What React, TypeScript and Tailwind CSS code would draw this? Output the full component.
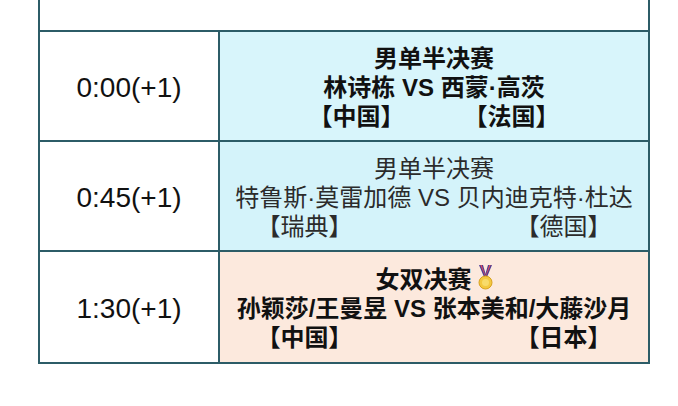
import React from 'react';

interface Match {
  time: string;
  title: string;
  players: string;
  left: string;
  right: string;
  gap: string;
  bg: string;
  tone: string;
  medal?: boolean;
}

const matches: Match[] = [
  {
    time: '0:00(+1)',
    title: '男单半决赛',
    players: '林诗栋 VS 西蒙·高茨',
    left: '【中国】',
    right: '【法国】',
    gap: 'gap-[59px]',
    bg: 'bg-[#d8f5fb]',
    tone: 'font-bold text-[#111111]',
  },
  {
    time: '0:45(+1)',
    title: '男单半决赛',
    players: '特鲁斯·莫雷加德 VS 贝内迪克特·杜达',
    left: '【瑞典】',
    right: '【德国】',
    gap: 'gap-[163px]',
    bg: 'bg-[#d4f3fa]',
    tone: 'font-normal text-[#2b2b2b]',
  },
  {
    time: '1:30(+1)',
    title: '女双决赛',
    players: '孙颖莎/王曼昱 VS 张本美和/大藤沙月',
    left: '【中国】',
    right: '【日本】',
    gap: 'gap-[163px]',
    bg: 'bg-[#fce9dd]',
    tone: 'font-bold text-[#111111]',
    medal: true,
  },
];

const Medal = () => (
  <svg width="15" height="25" viewBox="0 0 15 25" className="inline-block ml-[6px] align-[-2px]">
    <polygon points="1,0 5,0 8.5,12 6,12" fill="#4b3f95" />
    <polygon points="10,0 14,0 9,12 6.5,12" fill="#4b3f95" />
    <polygon points="2.3,0 3.7,0 7.5,11 7,11" fill="#e04b5a" />
    <polygon points="11.3,0 12.7,0 8,11 7.5,11" fill="#e04b5a" />
    <circle cx="7.5" cy="17.5" r="6.5" fill="#f3c83f" stroke="#d9a21f" strokeWidth="1" />
    <circle cx="7.5" cy="17.5" r="3.5" fill="#f8db6a" />
  </svg>
);

export default function App() {
  return (
    <div
      className="w-[678px] h-[406px] bg-white"
      style={{ fontFamily: '"Liberation Sans", "Noto Sans CJK SC", sans-serif' }}
    >
      <div className="ml-[38px] w-[612px] border-x-2 border-b-2 border-[#2c5c67]">
        <div className="h-[32px] border-b-2 border-[#2c5c67] bg-white" />
        {matches.map((m, i) => (
          <div
            key={i}
            className={`flex h-[110px] ${i < matches.length - 1 ? 'border-b-2' : ''} border-[#2c5c67]`}
          >
            <div className="w-[180px] shrink-0 border-r-2 border-[#2c5c67] bg-white flex items-center justify-center pt-[3px] text-[28px] text-[#111111]">
              {m.time}
            </div>
            <div
              className={`flex-1 ${m.bg} ${m.tone} flex flex-col items-center justify-center pt-[3px] text-[24px] leading-[29px]`}
            >
              <div>
                {m.title}
                {m.medal && <Medal />}
              </div>
              <div className="whitespace-nowrap">{m.players}</div>
              <div className={`flex ${m.gap}`}>
                <span>{m.left}</span>
                <span>{m.right}</span>
              </div>
            </div>
          </div>
        ))}
      </div>
    </div>
  );
}
